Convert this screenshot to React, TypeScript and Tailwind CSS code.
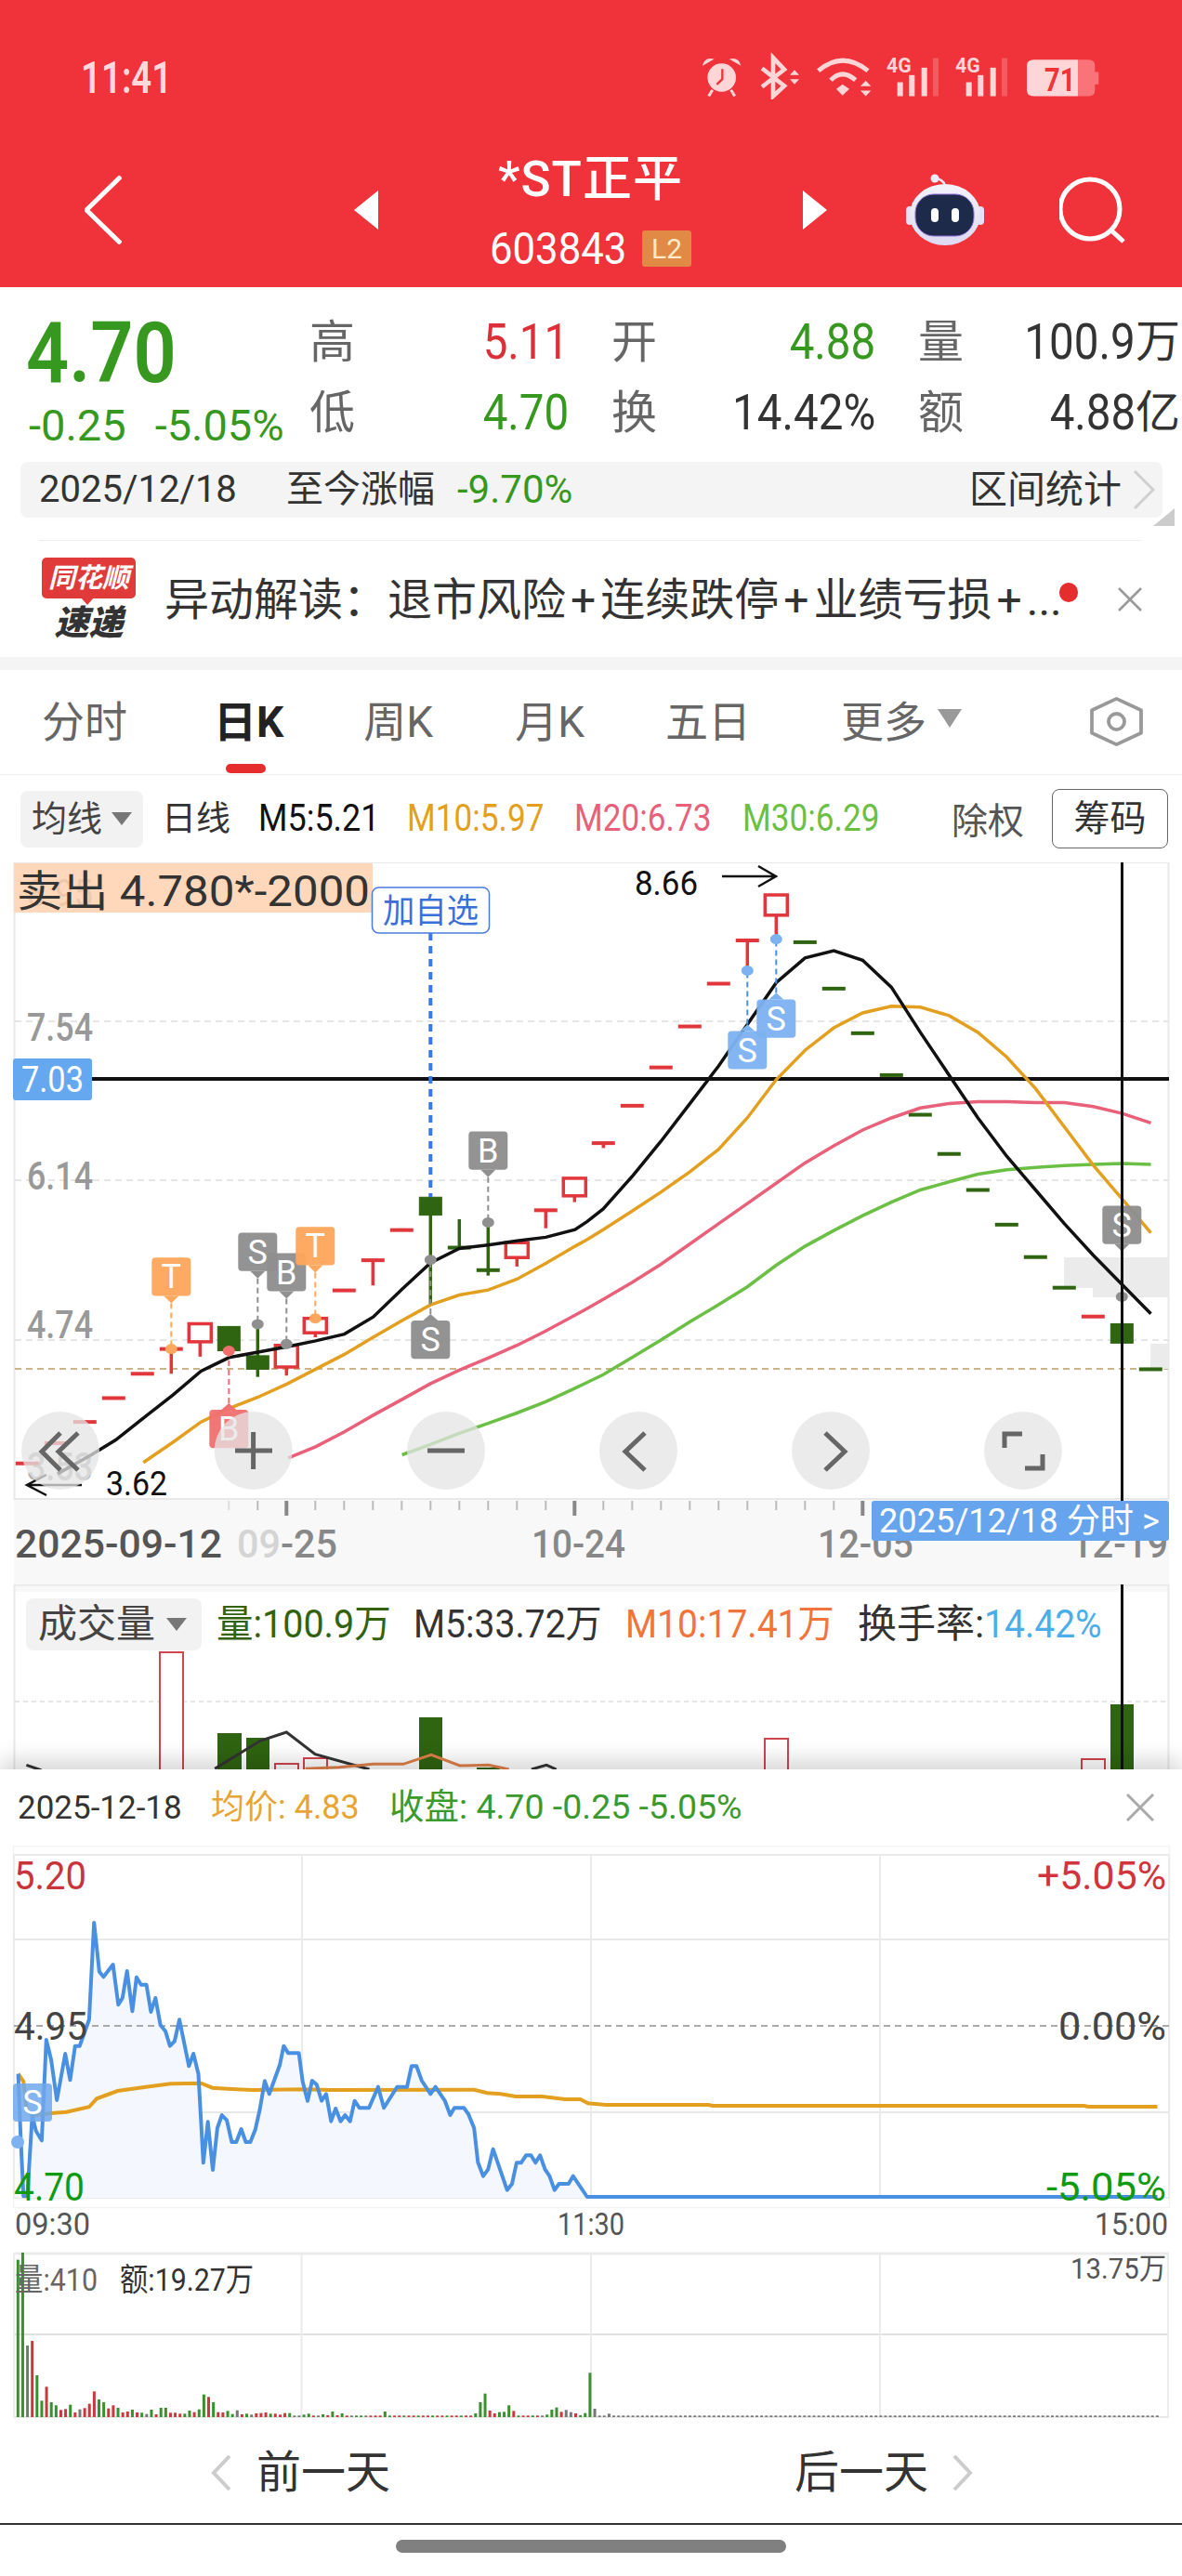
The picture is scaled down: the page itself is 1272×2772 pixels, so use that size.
const RED = "#E0363C";
const DARK_GREEN = "#2F6410";

// points traced from the screenshot as "x,y x,y", scaled back to page pixels
function tr(src: string, x0: number, y0: number, sx: number, sy: number) {
  return src
    .split(" ")
    .map((p) => {
      const [x, y] = p.split(",").map(Number);
      return `${(x0 + x / sx).toFixed(1)},${(y0 + y / sy).toFixed(1)}`;
    })
    .join(" ");
}
const kL = (s: string) => tr(s, 0, 900, 2.45, 2.063);
const kR = (s: string) => tr(s, 632, 900, 2.45, 2.063);
const ky = (v: number) => 900 + v / 2.063;
const kx = (k: number) => 463.3 + 31 * k;

const ma5 =
  kL("152,1415 237,1375 305,1340 380,1290 456,1240 530,1187 604,1157 680,1145 756,1133 832,1120 908,1105 984,1067 1060,1005 1135,947 1211,915 1287,907 1363,898 1439,890 1516,873") +
  " " +
  kR("0,855 42,827 118,755 194,677 270,594 346,510 422,418 498,325 574,270 650,254 726,275 802,335 878,435 954,530 1030,625 1106,710 1182,785 1258,860 1334,930 1410,995 1486,1060");
const ma10 =
  kL("378,1390 456,1345 530,1300 604,1270 680,1245 756,1216 832,1183 908,1150 984,1112 1060,1075 1135,1040 1211,1018 1287,1007 1363,983 1439,948 1516,910") +
  " " +
  kR("0,895 42,873 118,832 194,790 270,745 346,695 422,625 498,540 574,475 650,425 726,392 802,377 878,379 954,398 1030,435 1106,490 1182,560 1258,645 1334,730 1410,805 1486,880");
const ma20 =
  kL("760,1380 832,1355 908,1322 984,1285 1060,1250 1135,1215 1211,1185 1287,1158 1363,1130 1439,1098 1516,1063") +
  " " +
  kR("0,1048 42,1028 118,990 194,950 270,905 346,860 422,815 498,770 574,725 650,687 726,652 802,625 878,603 954,593 1030,589 1106,589 1182,591 1258,591 1334,600 1410,615 1486,636");
const ma30 =
  kL("1060,1373 1135,1350 1211,1325 1287,1303 1363,1280 1439,1255 1516,1225") +
  " " +
  kR("0,1212 42,1195 118,1157 194,1118 270,1078 346,1040 422,1000 498,952 574,910 650,875 726,842 802,812 878,785 954,767 1030,750 1106,740 1182,735 1258,731 1334,728 1410,726 1486,728");

// k, bodyTop, bodyBottom, wickTop, wickBottom, colour, hollow
type Candle = [number, number, number, number, number, string, boolean?];
const dash = (k: number, y: number, c: string): Candle => [k, y, y, y, y, c];
const candles: Candle[] = [
  dash(-14, 1392, RED),
  dash(-13, 1347, RED),
  dash(-12, 1300, RED),
  dash(-11, 1247, RED),
  dash(-10, 1193, RED),
  [-9, 1138, 1138, 1138, 1193, RED],
  [-8, 1082, 1122, 1082, 1155, RED, true],
  [-7, 1088, 1142, 1088, 1142, DARK_GREEN],
  [-6, 1153, 1183, 1085, 1200, DARK_GREEN],
  [-5, 1130, 1178, 1130, 1197, RED, true],
  [-4, 1070, 1102, 1070, 1112, RED, true],
  dash(-3, 1008, RED),
  [-2, 941, 941, 941, 997, RED],
  dash(-1, 874, RED),
  [0, 801, 841, 801, 1040, DARK_GREEN],
  [1, 913, 913, 850, 915, DARK_GREEN],
  [2, 963, 963, 860, 975, DARK_GREEN],
  [3, 902, 935, 902, 955, RED, true],
  [4, 830, 830, 830, 870, RED],
  [5, 759, 798, 759, 812, RED, true],
  [6, 681, 681, 681, 692, RED],
  dash(7, 598, RED),
  dash(8, 513, RED),
  dash(9, 422, RED),
  dash(10, 327, RED),
  [11, 231, 231, 231, 298, RED],
  [12, 130, 175, 130, 228, RED, true],
  dash(13, 235, DARK_GREEN),
  dash(14, 338, DARK_GREEN),
  dash(15, 437, DARK_GREEN),
  dash(16, 530, DARK_GREEN),
  dash(17, 618, DARK_GREEN),
  dash(18, 705, DARK_GREEN),
  dash(19, 785, DARK_GREEN),
  dash(20, 862, DARK_GREEN),
  dash(21, 934, DARK_GREEN),
  dash(22, 1002, DARK_GREEN),
  dash(23, 1066, RED),
  [24, 1082, 1125, 1082, 1125, DARK_GREEN],
  dash(25, 1183, DARK_GREEN),
];

const ORANGE = "#FFA75C";
const GREY = "#8F8F8F";
const BLUE = "#7DB2F0";
// k, box top, box bottom, dot y, letter, colour, tip direction
const markers: [number, number, number, number, string, string, "up" | "down"][] = [
  [-9, 935, 1020, 1138, "T", ORANGE, "down"],
  [-6, 880, 965, 1083, "S", GREY, "down"],
  [-5, 925, 1010, 1127, "B", GREY, "down"],
  [-4, 867, 952, 1070, "T", ORANGE, "down"],
  [-7, 1273, 1358, 1142, "B", "#F07070", "up"],
  [0, 1075, 1160, 940, "S", GREY, "up"],
  [2, 655, 740, 857, "B", GREY, "down"],
  [11, 432, 517, 298, "S", BLUE, "up"],
  [12, 362, 447, 228, "S", BLUE, "up"],
  [24, 820, 905, 1022, "S", GREY, "down"],
];

function Label(props: { x: number; y: number; w?: number; size: number; fill: string; weight?: number; children: React.ReactNode }) {
  return (
    <text
      x={props.x}
      y={props.y}
      fontSize={props.size}
      fill={props.fill}
      fontWeight={props.weight}
      textLength={props.w}
      lengthAdjust={props.w ? "spacingAndGlyphs" : undefined}
    >
      {props.children}
    </text>
  );
}

function Marker({ m }: { m: (typeof markers)[number] }) {
  const [k, t, b, d, letter, fill, tip] = m;
  const x = kx(k);
  const top = ky(t);
  const bottom = ky(b);
  const dot = ky(d);
  const tipY = tip === "down" ? bottom + 8 : top - 7;
  const edge = tip === "down" ? bottom : top;
  return (
    <g>
      <line x1={x} x2={x} y1={tipY} y2={dot} stroke={fill === BLUE ? "#4A90E2" : fill} strokeWidth={2} strokeDasharray="6 4" />
      <ellipse cx={x} cy={dot} rx={6.5} ry={5.5} fill={fill} />
      <polygon points={`${x - 8},${edge} ${x + 8},${edge} ${x},${tipY}`} fill={fill} />
      <rect x={x - 21} y={top} width={42} height={bottom - top} rx={4} fill={fill} opacity={0.96} />
      <text x={x} y={bottom - 8} fontSize={36} fill="#fff" textAnchor="middle">
        {letter}
      </text>
    </g>
  );
}

function RoundBtn({ cx, d }: { cx: number; d: string }) {
  return (
    <g>
      <circle cx={cx} cy={1561} r={42} fill="#E4E4E4" fillOpacity={0.75} />
      <path d={d} fill="none" stroke="#666" strokeWidth={5} />
    </g>
  );
}

function KChart() {
  return (
    <svg viewBox="0 928 1272 777" width={1272} height={777} className="block">
      <rect x={15} y={1613} width={1243} height={92} fill="#F8F8F8" />
      <rect x={15.5} y={928} width={1242} height={685} fill="#fff" stroke="#E8E8E8" strokeWidth={2} />
      {[1099, 1270, 1442].map((y) => (
        <line key={y} x1={16} x2={1257} y1={y} y2={y} stroke="#DEDEDE" strokeWidth={1.5} strokeDasharray="7 5" />
      ))}
      <line x1={16} x2={1257} y1={1473} y2={1473} stroke="#C9B48A" strokeWidth={2} strokeDasharray="7 5" />
      <rect x={1145} y={1353} width={113} height={33} fill="#EBEBEB" />
      <rect x={1176} y={1386} width={82} height={10} fill="#EBEBEB" />
      <rect x={1238} y={1446} width={20} height={27} fill="#EBEBEB" />

      <Label x={29} y={1120} w={71} size={42} fill="#999" weight={500}>7.54</Label>
      <Label x={29} y={1280} w={71} size={42} fill="#999" weight={500}>6.14</Label>
      <Label x={29} y={1440} w={71} size={42} fill="#999" weight={500}>4.74</Label>
      <Label x={29} y={1593} w={71} size={42} fill="#AAA" weight={500}>3.53</Label>

      {candles.map(([k, t, b, wt, wb, c, hollow]) => {
        const x = kx(k);
        const thin = t === b;
        return (
          <g key={k}>
            <line x1={x} x2={x} y1={ky(wt)} y2={ky(wb)} stroke={c} strokeWidth={3.5} />
            {thin ? (
              <rect x={x - 12.5} y={ky(t) - 2} width={25} height={4} fill={c} />
            ) : (
              <rect
                x={x - 12}
                y={ky(t)}
                width={24}
                height={ky(b) - ky(t)}
                fill={hollow ? "#fff" : c}
                stroke={c}
                strokeWidth={hollow ? 3.5 : 1}
              />
            )}
          </g>
        );
      })}

      <line x1={99} x2={1258} y1={1161} y2={1161} stroke="#111" strokeWidth={4} />
      <rect x={14} y={1139} width={85} height={45} rx={3} fill="#66A8F0" />
      <Label x={23} y={1175} w={67} size={38} fill="#fff">7.03</Label>

      <polyline points={ma30} fill="none" stroke="#6CBF45" strokeWidth={3.5} />
      <polyline points={ma20} fill="none" stroke="#E8607A" strokeWidth={3.5} />
      <polyline points={ma10} fill="none" stroke="#E3A020" strokeWidth={3.5} />
      <polyline points={ma5} fill="none" stroke="#111" strokeWidth={3.5} />

      <line x1={463.3} x2={463.3} y1={1004} y2={1288} stroke="#3B78E8" strokeWidth={4} strokeDasharray="8 6" />
      {markers.map((m, i) => (
        <Marker key={i} m={m} />
      ))}

      <rect x={15} y={929} width={386} height={53} fill="#FFD8BC" />
      <Label x={29} y={975} w={71} size={40} fill="#EDC8AD">8.95</Label>
      <Label x={18} y={975} w={380} size={46} fill="#333">卖出 4.780*-2000</Label>
      <rect x={400.5} y={955} width={126} height={49} rx={7} fill="#fff" stroke="#4A7BDC" strokeWidth={1.5} />
      <Label x={412} y={993} w={103} size={36} fill="#3B6FD8">加自选</Label>

      <Label x={683} y={963} w={68} size={36} fill="#111">8.66</Label>
      <path d="M777 943H835M816 932L835 943L816 954" fill="none" stroke="#111" strokeWidth={2.5} />
      <Label x={114} y={1609} w={66} size={36} fill="#111">3.62</Label>
      <path d="M88 1598H29M50 1587L29 1598L50 1609" fill="none" stroke="#111" strokeWidth={2.5} />

      <RoundBtn cx={65} d="M65 1542L45 1562L65 1582M84 1542L63 1562L84 1582" />
      <RoundBtn cx={272.6} d="M253 1561H293M272.6 1541V1581" />
      <RoundBtn cx={480} d="M460 1561H500" />
      <RoundBtn cx={687} d="M694 1542L673 1562L694 1582" />
      <RoundBtn cx={894} d="M888 1542L909 1562L888 1582" />
      <RoundBtn cx={1101} d="M1081 1558V1543H1100M1103 1580H1122V1565" />

      {Array.from({ length: 33 }, (_, i) => {
        const k = -7 + i;
        const major = k === -5 || k === 5 || k === 15;
        return (
          <line
            key={k}
            x1={kx(k)}
            x2={kx(k)}
            y1={1615}
            y2={major ? 1631 : 1625}
            stroke={major ? "#888" : k === -7 ? "#DDD" : "#BBB"}
            strokeWidth={major ? 4 : 2}
          />
        );
      })}
      <Label x={16} y={1676} w={223} size={42} fill="#555" weight={500}>2025-09-12</Label>
      <text x={255} y={1676} fontSize={42} fontWeight={500} fill="#888" textLength={108} lengthAdjust="spacingAndGlyphs">
        <tspan fill="#D4D4D4">09</tspan>-25
      </text>
      <Label x={572} y={1676} w={101} size={42} fill="#888" weight={500}>10-24</Label>
      <Label x={880} y={1676} w={103} size={42} fill="#888" weight={500}>12-05</Label>
      <Label x={1153} y={1676} w={104} size={42} fill="#888" weight={500}>12-19</Label>
      <rect x={938} y={1615} width={320} height={43} rx={3} fill="#66A4EE" />
      <Label x={946} y={1649} w={302} size={36} fill="#fff">2025/12/18 分时 &gt;</Label>

      <line x1={1207.5} x2={1207.5} y1={928} y2={1615} stroke="#111" strokeWidth={3} />
    </svg>
  );
}

const sub = (s: string) => tr(s, 0, 1660, 1.2327, 3);

function VolumeBars() {
  const hollowBars: [number, number, number][] = [
    [172, 197, 1778],
    [296, 321, 1898],
    [327, 352, 1892],
    [823, 848, 1871],
    [1164, 1189, 1893],
  ];
  const solidBars: [number, number, number][] = [
    [234, 260, 1865],
    [265, 290, 1870],
    [451, 476, 1848],
    [513, 538, 1902],
    [1195, 1220, 1834],
  ];
  return (
    <svg viewBox="0 1705 1272 199" width={1272} height={199} className="absolute left-0 top-0">
      <rect x={15} y={1705} width={1243} height={8} fill="#F8F8F8" />
      <line x1={15} x2={1258} y1={1705.5} y2={1705.5} stroke="#E8E8E8" strokeWidth={2} />
      <line x1={15.5} x2={15.5} y1={1705} y2={1904} stroke="#E8E8E8" strokeWidth={2} />
      <line x1={1257.5} x2={1257.5} y1={1705} y2={1904} stroke="#E8E8E8" strokeWidth={2} />
      <line x1={16} x2={1257} y1={1831} y2={1831} stroke="#DEDEDE" strokeWidth={1.5} strokeDasharray="5 4" />
      {hollowBars.map(([a, b, t]) => (
        <rect key={a} x={a} y={t} width={b - a} height={1910 - t} fill="#fff" stroke="#D0454F" strokeWidth={2} />
      ))}
      {solidBars.map(([a, b, t]) => (
        <rect key={a} x={a} y={t} width={b - a} height={1904 - t} fill={DARK_GREEN} />
      ))}
      <polyline points={sub("35,718 55,735")} fill="none" stroke="#333" strokeWidth={3} />
      <polyline points={sub("285,730 345,640 380,612 418,683 490,732")} fill="none" stroke="#333" strokeWidth={3} />
      <polyline points={sub("705,732 725,718 738,732")} fill="none" stroke="#333" strokeWidth={3} />
      <polyline points={sub("405,730 450,725 495,715 535,715 572,685 610,720 648,718 675,732")} fill="none" stroke="#E0804A" strokeWidth={3} />
      <line x1={1207.5} x2={1207.5} y1={1705} y2={1904} stroke="#111" strokeWidth={3} />
    </svg>
  );
}

const dayL = (s: string) => tr(s, 0, 1920, 2.45, 3);
const dayR = (s: string) => tr(s, 632, 1920, 2.45, 3);
const price = dayL(
  "48,935 55,1150 62,1330 72,1330 85,1070 95,1120 110,1150 122,825 135,890 150,1020 172,870 185,955 198,845 210,845 235,760 248,447 262,605 273,622 298,582 312,712 323,690 335,603 349,733 360,623 372,647 386,647 398,735 410,690 423,778 436,797 448,845 460,830 473,760 498,910 510,870 523,935 536,1222 548,1090 561,1245 573,1110 585,1068 598,1085 611,1155 623,1155 636,1113 648,1155 660,1155 673,1115 685,1050 698,958 710,1000 738,905 748,845 760,868 788,868 798,960 811,1022 823,957 835,970 848,1022 860,1000 873,1088 885,1047 898,1088 910,1068 923,1088 935,1022 948,1045 973,1045 997,977 1012,1045 1047,977 1073,977 1085,910 1098,910 1112,957 1135,1000 1148,977 1173,1022 1187,1068 1198,1045 1223,1045 1235,1065 1250,1110 1260,1220 1274,1265 1287,1243 1300,1178 1337,1310 1350,1290 1362,1222 1374,1222 1387,1198 1400,1198 1412,1222 1424,1198 1437,1243 1449,1265 1462,1310 1474,1290 1499,1290 1511,1265 1548,1332"
);
const avg =
  dayL("48,935 62,960 70,1050 85,1070 135,1062 175,1058 235,1042 255,1015 310,990 380,978 450,967 530,965 560,980 610,984 665,987 800,985 870,987 1250,986 1285,997 1320,1000 1360,1008 1430,1008 1490,1017 1530,1017 1550,1030") +
  " " +
  dayR("0,1030 50,1035 320,1035 330,1038 1310,1038 1320,1041 1503,1041");

// tops of the minute bars, traced in 3x crop units; baseline sits at 543
const minuteTops: [string, number][] = [
  ["g", 35], ["g", 12], ["k", 312], ["r", 297], ["g", 408], ["g", 490], ["r", 445], ["g", 495], ["g", 505], ["r", 520],
  ["r", 517], ["g", 503], ["r", 528], ["k", 518], ["r", 514], ["r", 500], ["r", 460], ["g", 486], ["g", 495], ["r", 515],
  ["r", 505], ["g", 513], ["r", 528], ["r", 525], ["g", 519], ["r", 528], ["g", 529], ["k", 533], ["g", 519], ["r", 534],
  ["g", 513], ["g", 513], ["r", 529], ["r", 529], ["r", 532], ["g", 532], ["g", 522], ["r", 527], ["g", 518], ["g", 470],
  ["r", 478], ["g", 495], ["r", 527], ["r", 528], ["g", 523], ["g", 533], ["k", 521], ["r", 534], ["g", 532], ["k", 535],
  ["r", 531], ["r", 530], ["r", 528], ["g", 532], ["r", 532], ["r", 535], ["r", 530], ["g", 530], ["k", 538], ["k", 538],
  ["g", 535], ["g", 532], ["r", 538], ["k", 538], ["g", 534], ["r", 537], ["g", 525], ["r", 537], ["g", 531], ["r", 538],
  ["k", 538], ["g", 538], ["g", 538], ["k", 538], ["r", 538], ["r", 538], ["r", 538], ["g", 525],
];
const sparse: Record<number, [string, number]> = {
  96: ["g", 531], 97: ["g", 495], 98: ["g", 467], 99: ["r", 522], 100: ["r", 531], 101: ["g", 527], 102: ["g", 526],
  103: ["g", 505], 104: ["r", 523], 111: ["g", 535], 112: ["g", 519], 113: ["g", 512], 114: ["r", 526], 115: ["k", 520],
  116: ["k", 527], 117: ["r", 531], 118: ["g", 537], 119: ["g", 530], 120: ["g", 400], 121: ["k", 516], 124: ["k", 532],
};
const barColor: Record<string, string> = { g: "#3A8F2E", r: "#C9383E", k: "#777" };

function DayChart() {
  const bars = Array.from({ length: 240 }, (_, i) => {
    const b = minuteTops[i] ?? sparse[i] ?? [i < 110 ? (i % 3 === 0 ? "g" : "r") : "k", 538];
    return { x: 19.3 + 5.13 * i, c: barColor[b[0]], top: 2420 + b[1] / 3 };
  });
  return (
    <svg viewBox="0 1986 1272 616" width={1272} height={616} className="block">
      <rect x={14.5} y={1986.5} width={1244} height={389} fill="none" stroke="#F2F2F2" strokeWidth={1.5} />
      <rect x={15} y={1996} width={1243} height={369} fill="#fff" stroke="#EBEBEB" strokeWidth={2} />
      {[2087, 2273].map((y) => (
        <line key={y} x1={15} x2={1258} y1={y} y2={y} stroke="#E8E8E8" strokeWidth={2} />
      ))}
      {[325, 636, 947].map((x) => (
        <line key={x} x1={x} x2={x} y1={1996} y2={2365} stroke="#EBEBEB" strokeWidth={2} />
      ))}
      <polygon points={`19.6,2365 ${price} 636,2364 636,2365`} fill="#F4F8FE" />
      <line x1={15} x2={1258} y1={2180} y2={2180} stroke="#AAA" strokeWidth={2} strokeDasharray="7 5" />
      <polyline points={avg} fill="none" stroke="#E3A020" strokeWidth={4} />
      <polyline points={`${price} 1245.5,2364`} fill="none" stroke="#4A90E2" strokeWidth={4} strokeLinejoin="round" />
      <ellipse cx={19} cy={2305} rx={7} ry={7} fill="#7DB2F0" />
      <rect x={14} y={2242} width={42} height={41} rx={4} fill="#6FA8EC" opacity={0.85} />
      <text x={35} y={2275} fontSize={36} fill="#fff" textAnchor="middle">S</text>

      <Label x={15} y={2033} w={78} size={42} fill="#C9343C">5.20</Label>
      <Label x={15} y={2195} w={79} size={42} fill="#444">4.95</Label>
      <Label x={15} y={2368} w={76} size={42} fill="#109A10">4.70</Label>
      <Label x={1116} y={2033} w={139} size={42} fill="#D0343C">+5.05%</Label>
      <Label x={1139} y={2195} w={116} size={42} fill="#444">0.00%</Label>
      <Label x={1126} y={2368} w={129} size={42} fill="#109A10">-5.05%</Label>
      <Label x={16} y={2405} w={81} size={34} fill="#555">09:30</Label>
      <Label x={600} y={2405} w={72} size={34} fill="#555">11:30</Label>
      <Label x={1178} y={2405} w={79} size={34} fill="#555">15:00</Label>

      <line x1={15} x2={1258} y1={2425} y2={2425} stroke="#EBEBEB" strokeWidth={3} />
      <line x1={15} x2={1258} y1={2512} y2={2512} stroke="#E0E0E0" strokeWidth={2} />
      <line x1={15} x2={1258} y1={2601} y2={2601} stroke="#E8E8E8" strokeWidth={2} />
      <line x1={15} x2={15} y1={2424} y2={2601} stroke="#EBEBEB" strokeWidth={2} />
      <line x1={1257} x2={1257} y1={2424} y2={2601} stroke="#EBEBEB" strokeWidth={2} />
      {[324.5, 636, 947].map((x) => (
        <line key={x} x1={x} x2={x} y1={2424} y2={2601} stroke="#EBEBEB" strokeWidth={2} />
      ))}
      {bars.map((b, i) => (
        <rect key={i} x={b.x - 1.5} y={b.top} width={3} height={2601 - b.top} fill={b.c} />
      ))}
      <Label x={16} y={2465} w={89} size={34} fill="#666">量:410</Label>
      <Label x={129} y={2465} w={144} size={34} fill="#333">额:19.27万</Label>
      <Label x={1152} y={2452} w={103} size={32} fill="#555">13.75万</Label>
    </svg>
  );
}

function StatusIcons() {
  const c = "#FFD6D8";
  const signal = (dx: number) => (
    <g>
      <text x={642 + dx} y={85} fontSize={64} fontWeight={700} fill={c} textLength={80} lengthAdjust="spacingAndGlyphs">4G</text>
      <rect x={677 + dx} y={115} width={18} height={45} fill={c} />
      <rect x={715 + dx} y={92} width={18} height={68} fill={c} />
      <rect x={755 + dx} y={68} width={18} height={92} fill={c} />
      <rect x={792 + dx} y={37} width={18} height={123} fill={c} opacity={0.25} />
    </g>
  );
  return (
    <svg viewBox="0 0 1350 170" width={450} height={57} className="mt-[50px]">
      <circle cx={110} cy={100} r={46} fill={c} />
      <path d="M48 62Q54 32 86 40ZM172 62Q166 32 134 40Z" fill={c} />
      <path d="M80 140L68 160M140 140L152 160" stroke={c} strokeWidth={9} />
      <path d="M112 72V105L94 122" stroke="#F0323A" strokeWidth={7} fill="none" />
      <path d="M240 70L312 127L276 160V36L312 74L240 130" stroke={c} strokeWidth={14} fill="none" />
      <path d="M330 92L345 75L360 92ZM330 105L345 122L360 105Z" fill={c} />
      <path d="M422 78Q500 12 582 78M462 108Q500 70 542 108" stroke={c} strokeWidth={15} fill="none" />
      <path d="M480 137L500 122L522 137L500 158Z" fill={c} />
      <path d="M558 128L575 110L592 128ZM558 142L575 160L592 142Z" fill={c} />
      {signal(0)}
      {signal(222)}
      <path d="M1260 42H1295Q1315 42 1315 62V82H1327V122H1315V140Q1315 160 1295 160H1260Z" fill="#FA7378" />
      <path d="M1260 42H1117Q1095 42 1095 62V140Q1095 160 1117 160H1260Z" fill={c} />
      <text x={1152} y={145} fontSize={106} fontWeight={700} fill="#F0323A" textLength={100} lengthAdjust="spacingAndGlyphs">71</text>
    </svg>
  );
}

function Robot() {
  return (
    <svg viewBox="975 183 84 78" width={84} height={78} className="shrink-0">
      <defs>
        <linearGradient id="shell" x1="0" y1="0" x2="0" y2="1">
          <stop offset="0" stopColor="#F4F3FB" />
          <stop offset="1" stopColor="#DDDAF2" />
        </linearGradient>
      </defs>
      <path d="M1017 196C1016 191 1011 188 1006 188" stroke="#E9E7F5" strokeWidth={2.5} fill="none" />
      <circle cx={1006} cy={188} r={4.5} fill="#EDEBF7" />
      <rect x={975} y={218} width={8} height={20} rx={4} fill="#E4E1F4" />
      <rect x={1051} y={218} width={8} height={20} rx={4} fill="#E4E1F4" />
      <ellipse cx={1017} cy={227} rx={38} ry={33} fill="url(#shell)" />
      <rect x={985} y={205} width={63} height={45} rx={20} fill="#1E2A4A" stroke="#8C6FD8" strokeWidth={1} />
      <rect x={1002} y={220} width={8} height={15} rx={4} fill="#fff" />
      <rect x={1024} y={220} width={8} height={15} rx={4} fill="#fff" />
    </svg>
  );
}

function App() {
  return (
    <div className="relative w-[1272px] h-[2772px] overflow-hidden bg-white font-[Roboto,'Noto_Sans_CJK_SC',sans-serif]">
      {/* red top bar */}
      <header className="h-[309px] bg-[#F0323A] text-white">
        <div className="flex h-[143px] items-start justify-between pl-[87px] pr-[82px]">
          <span className="mt-[60px] inline-block origin-left scale-x-[0.8] text-[48px] font-semibold leading-none text-[#FFD9DB]">11:41</span>
          <StatusIcons />
        </div>
        <div className="flex h-[166px] items-center pl-[91px]">
          <svg viewBox="0 0 40 74" width={40} height={74} className="shrink-0">
            <path d="M39 1L2 37L39 73" fill="none" stroke="#fff" strokeWidth={5} />
          </svg>
          <svg viewBox="0 0 26 42" width={26} height={42} className="ml-[250px] shrink-0">
            <path d="M26 0L0 21L26 42Z" fill="#fff" />
          </svg>
          <div className="flex w-[457px] shrink-0 flex-col items-center">
            <div className="h-[56px] text-[53px] font-medium leading-[56px] tracking-[0.02em]">*ST正平</div>
            <div className="mt-[27px] flex h-[40px] items-center gap-[16px]">
              <span className="inline-block w-[148px] origin-left scale-x-[0.91] text-[48px] leading-none">603843</span>
              <span className="flex h-[39px] w-[53px] items-center justify-center rounded-[3px] bg-[#E08A45] text-[30px] leading-none text-[#FFE9C8]">L2</span>
            </div>
          </div>
          <svg viewBox="0 0 26 42" width={26} height={42} className="shrink-0">
            <path d="M0 0L26 21L0 42Z" fill="#fff" />
          </svg>
          <div className="ml-[85px]">
            <Robot />
          </div>
          <svg viewBox="1140 188 72 72" width={72} height={72} className="ml-[81px] shrink-0">
            <circle cx={1173} cy={223} r={32} fill="none" stroke="#fff" strokeWidth={5} />
            <path d="M1196 246L1209 258" stroke="#fff" strokeWidth={5} />
          </svg>
        </div>
      </header>

      {/* quote */}
      <section className="flex h-[173px] items-start">
        <div className="w-[333px] shrink-0 pl-[28px] pt-[27px]">
          <div className="origin-left scale-x-[0.9] text-[90px] font-semibold leading-none text-[#36981E]">4.70</div>
          <div className="mt-[8px] flex gap-[31px] pl-[3px] text-[47px] leading-none text-[#36981E]">
            <span>-0.25</span>
            <span>-5.05%</span>
          </div>
        </div>
        <div className="mt-[21px] grid grid-cols-[279px_284px_282px] gap-x-[46px]">
          {[
            ["高", "5.11", "text-[#DC3038]", ""],
            ["开", "4.88", "text-[#36981E]", ""],
            ["量", "100.9", "text-[#333]", "万"],
            ["低", "4.70", "text-[#36981E]", ""],
            ["换", "14.42%", "text-[#333]", ""],
            ["额", "4.88", "text-[#333]", "亿"],
          ].map(([label, value, color, unit]) => (
            <div key={label} className="flex h-[76px] items-center justify-between">
              <span className="text-[49px] leading-none text-[#666]">{label}</span>
              <span className={`flex items-center leading-none ${color}`}>
                <span className="inline-block origin-right scale-x-[0.88] text-[54px]">{value}</span>
                {unit && <span className="text-[48px]">{unit}</span>}
              </span>
            </div>
          ))}
        </div>
      </section>

      <div className="relative ml-[22px] mt-[15px] flex h-[60px] w-[1229px] items-center rounded-[8px] bg-[#F4F4F4] pl-[20px] text-[40px] leading-none text-[#333]">
        <span className="w-[266px] shrink-0">2025/12/18</span>
        <span className="w-[184px] shrink-0">至今涨幅</span>
        <span className="text-[42px] text-[#36981E]">-9.70%</span>
        <span className="ml-auto text-[41px]">区间统计</span>
        <svg viewBox="0 0 24 42" width={24} height={42} className="ml-[12px] mr-[8px]">
          <path d="M2 1L22 21L2 41" fill="none" stroke="#CFCFCF" strokeWidth={3} />
        </svg>
        <svg viewBox="0 0 23 19" width={23} height={19} className="absolute right-[-13px] top-[50px]">
          <path d="M23 0V19H0Z" fill="#CCCCCC" />
        </svg>
      </div>
      <div className="ml-[42px] mt-[24px] h-px w-[1187px] bg-[#EEEEEE]" />

      {/* news banner */}
      <div className="flex h-[125px] items-center pl-[45px]">
        <div className="flex w-[101px] shrink-0 flex-col items-center">
          <div className="relative flex h-[44px] w-[101px] items-center justify-center rounded-[5px] bg-[#E03A3A] text-[29px] font-bold italic leading-none text-white">
            同花顺
            <span className="absolute bottom-[-7px] left-[42px] h-0 w-0 border-x-[7px] border-t-[8px] border-x-transparent border-t-[#E03A3A]" />
          </div>
          <div className="mt-[8px] text-[37px] font-black italic leading-none text-[#333]">速递</div>
        </div>
        <div className="ml-[31px] mt-[2px] w-[963px] shrink-0 whitespace-nowrap text-[48px] leading-none text-[#333]">
          异动解读：退市风险
          <span className="px-[5px]">+</span>
          连续跌停
          <span className="px-[5px]">+</span>
          业绩亏损
          <span className="px-[5px]">+</span>...
        </div>
        <span className="h-[21px] w-[20px] shrink-0 -translate-y-[7px] rounded-full bg-[#E52D2D]" />
        <svg viewBox="0 0 26 26" width={26} height={26} className="ml-[43px] shrink-0">
          <path d="M1 1L25 25M25 1L1 25" stroke="#999" strokeWidth={2.5} />
        </svg>
      </div>
      <div className="h-[14px] bg-[#F4F4F4]" />

      {/* period tabs */}
      <nav className="relative flex h-[113px] items-center border-b border-[#EEEEEE] pl-[45px] text-[46px] leading-none text-[#666]">
        <span>分时</span>
        <span className="ml-[93px] font-bold text-[#222]">日K</span>
        <span className="ml-[86px]">周K</span>
        <span className="ml-[88px]">月K</span>
        <span className="ml-[87px]">五日</span>
        <span className="ml-[97px]">更多</span>
        <svg viewBox="0 0 26 20" width={26} height={20} className="ml-[12px] -translate-y-[4px]">
          <path d="M0 0H26L13 20Z" fill="#999" />
        </svg>
        <svg viewBox="0 0 60 56" width={57} height={53} className="ml-[138px] -translate-y-[1px]">
          <path d="M30 2L58 15V41L30 54L2 41V15Z" fill="none" stroke="#999" strokeWidth={4} strokeLinejoin="round" />
          <circle cx={30} cy={28} r={9} fill="none" stroke="#999" strokeWidth={4} />
        </svg>
        <span className="absolute left-[243px] top-[101px] h-[10px] w-[43px] rounded-full bg-[#E52D2D]" />
      </nav>

      {/* MA legend */}
      <div className="flex h-[94px] items-center pl-[22px]">
        <div className="flex h-[61px] w-[132px] shrink-0 items-center rounded-[8px] bg-[#F2F2F2] pl-[12px] text-[38px] leading-none text-[#444]">
          均线
          <svg viewBox="0 0 22 14" width={22} height={14} className="ml-[10px]">
            <path d="M0 0H22L11 14Z" fill="#777" />
          </svg>
        </div>
        <span className="ml-[20px] w-[104px] shrink-0 text-[37px] leading-none text-[#333]">日线</span>
        <span className="inline-block w-[160px] shrink-0 origin-left scale-x-[0.9] whitespace-nowrap text-[40px] leading-none text-[#111]">M5:5.21</span>
        <span className="inline-block w-[180px] shrink-0 origin-left scale-x-[0.88] whitespace-nowrap text-[40px] leading-none text-[#E3A020]">M10:5.97</span>
        <span className="inline-block w-[181px] shrink-0 origin-left scale-x-[0.88] whitespace-nowrap text-[40px] leading-none text-[#E8607A]">M20:6.73</span>
        <span className="inline-block w-[225px] shrink-0 origin-left scale-x-[0.88] whitespace-nowrap text-[40px] leading-none text-[#6CBF45]">M30:6.29</span>
        <span className="w-[108px] shrink-0 translate-y-[3px] text-[39px] leading-none text-[#555]">除权</span>
        <span className="flex h-[64px] w-[125px] shrink-0 items-center justify-center rounded-[8px] border-[1.5px] border-[#666] text-[39px] leading-none text-[#333]">筹码</span>
      </div>

      <KChart />

      {/* volume panel, cut off by the sheet below */}
      <div className="relative h-[199px]">
        <VolumeBars />
        <div className="relative flex items-center pl-[28px] pt-[15px] text-[42px] leading-none">
          <div className="flex h-[56px] w-[189px] shrink-0 items-center rounded-[8px] bg-[#F2F2F2] pl-[13px] text-[#444]">
            成交量
            <svg viewBox="0 0 22 14" width={22} height={14} className="ml-[12px]">
              <path d="M0 0H22L11 14Z" fill="#777" />
            </svg>
          </div>
          <span className="ml-[16px] inline-block w-[212px] shrink-0 origin-left scale-x-[0.94] whitespace-nowrap text-[#33620F]">量:100.9万</span>
          <span className="inline-block w-[228px] shrink-0 origin-left scale-x-[0.93] whitespace-nowrap text-[#333]">M5:33.72万</span>
          <span className="inline-block w-[250px] shrink-0 origin-left scale-x-[0.93] whitespace-nowrap text-[#F0743C]">M10:17.41万</span>
          <span className="whitespace-nowrap text-[#333]">换手率:</span>
          <span className="inline-block origin-left scale-x-[0.93] text-[#4BAEE8]">14.42%</span>
        </div>
      </div>

      {/* day detail sheet */}
      <section className="relative bg-white shadow-[0_-10px_22px_rgba(0,0,0,0.16)]">
        <div className="flex h-[82px] items-center pl-[19px] text-[36px] leading-none">
          <span className="w-[208px] shrink-0 text-[35px] text-[#333]">2025-12-18</span>
          <span className="w-[192px] shrink-0 whitespace-nowrap text-[#E8A533]">均价: 4.83</span>
          <span className="whitespace-nowrap text-[37.5px] text-[#3A9A2E]">收盘: 4.70 -0.25 -5.05%</span>
          <svg viewBox="0 0 30 30" width={30} height={30} className="ml-auto mr-[30px]">
            <path d="M1 1L29 29M29 1L1 29" stroke="#AAA" strokeWidth={3} />
          </svg>
        </div>
        <DayChart />
        <div className="flex h-[113px] items-center pl-[227px] pt-[4px] text-[48px] leading-none text-[#333]">
          <svg viewBox="0 0 22 38" width={22} height={38}>
            <path d="M20 1L3 19L20 37" fill="none" stroke="#CCC" strokeWidth={4} />
          </svg>
          <span className="ml-[27px]">前一天</span>
          <span className="ml-[435px]">后一天</span>
          <svg viewBox="0 0 22 38" width={22} height={38} className="ml-[26px]">
            <path d="M2 1L19 19L2 37" fill="none" stroke="#CCC" strokeWidth={4} />
          </svg>
        </div>
        <div className="h-[2px] bg-[#333]" />
        <div className="flex h-[55px] justify-center pt-[16px]">
          <span className="h-[14px] w-[420px] rounded-full bg-[#808080]" />
        </div>
      </section>
    </div>
  );
}

export default App;
